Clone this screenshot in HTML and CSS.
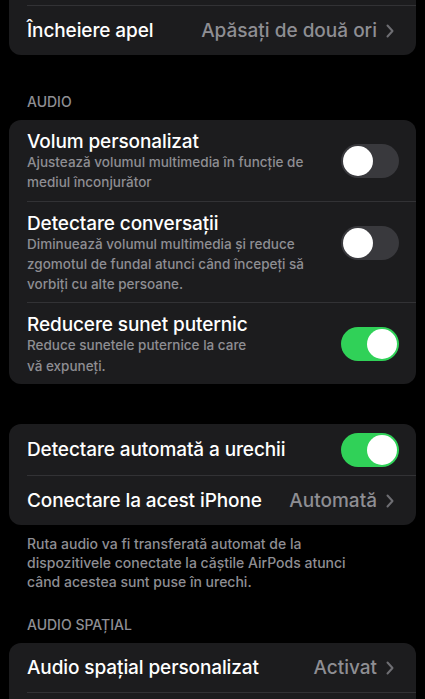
FILE: index.html
```html
<!DOCTYPE html>
<html>
<head>
    <title>AirPods</title>
    <link rel="stylesheet" href="styles.css">
</head>
<body>
    <div class="page">
        <div class="card">
            <div class="row simple"><span class="title">&nbsp;</span></div>
            <div class="row simple">
                <span class="title">Încheiere apel</span>
                <span class="value">Apăsați de două ori <svg class="chev" viewBox="0 0 8 14"><path d="M1.5 1.5 L6.5 7 L1.5 12.5" /></svg></span>
            </div>
        </div>

        <div class="header">AUDIO</div>
        <div class="card">
            <div class="row tall">
                <div class="text">
                    <div class="title">Volum personalizat</div>
                    <div class="sub">Ajustează volumul multimedia în funcție de mediul înconjurător</div>
                </div>
                <div class="toggle"><div class="knob"></div></div>
            </div>
            <div class="row tall">
                <div class="text">
                    <div class="title">Detectare conversații</div>
                    <div class="sub">Diminuează volumul multimedia și reduce zgomotul de fundal atunci când începeți să vorbiți cu alte persoane.</div>
                </div>
                <div class="toggle"><div class="knob"></div></div>
            </div>
            <div class="row tall">
                <div class="text">
                    <div class="title">Reducere sunet puternic</div>
                    <div class="sub narrow">Reduce sunetele puternice la care vă expuneți.</div>
                </div>
                <div class="toggle on"><div class="knob"></div></div>
            </div>
        </div>

        <div class="card gap">
            <div class="row simple first">
                <span class="title">Detectare automată a urechii</span>
                <div class="toggle on"><div class="knob"></div></div>
            </div>
            <div class="row simple">
                <span class="title">Conectare la acest iPhone</span>
                <span class="value">Automată <svg class="chev" viewBox="0 0 8 14"><path d="M1.5 1.5 L6.5 7 L1.5 12.5" /></svg></span>
            </div>
        </div>
        <div class="footer">Ruta audio va fi transferată automat de la dispozitivele conectate la căștile AirPods atunci când acestea sunt puse în urechi.</div>

        <div class="header">AUDIO SPAȚIAL</div>
        <div class="card">
            <div class="row simple">
                <span class="title">Audio spațial personalizat</span>
                <span class="value">Activat <svg class="chev" viewBox="0 0 8 14"><path d="M1.5 1.5 L6.5 7 L1.5 12.5" /></svg></span>
            </div>
            <div class="row simple"><span class="title">&nbsp;</span></div>
        </div>
    </div>
</body>
</html>
```

FILE: styles.css
```css
body {
    margin: 0;
    padding: 0;
    background-color: #000;
    color: #fff;
    font-family: Inter, "Noto Sans", sans-serif;
    overflow: hidden;
}

.page {
    margin-top: -44px;
    padding: 0 9px;
}

.card {
    background-color: #1c1c1e;
    border-radius: 12px;
    padding-left: 18px;
}

.card.gap {
    margin-top: 40px;
}

.row {
    display: flex;
    align-items: center;
    justify-content: space-between;
    padding-right: 17px;
    border-top: 1px solid #323235;
}

.row:first-child {
    border-top: none;
}

.row.simple {
    height: 49px;
}

.row.simple.first {
    height: 51px;
}

.row.tall {
    align-items: flex-start;
    padding-top: 11px;
    padding-bottom: 8px;
}

.row.tall .toggle {
    margin-top: 13px;
}

.title {
    font-size: 19px;
    line-height: 21px;
    font-weight: 500;
    letter-spacing: -0.1px;
}

.sub {
    font-size: 13.5px;
    line-height: 20.3px;
    color: #8e8e93;
    font-weight: 500;
    max-width: 300px;
}

.sub.narrow {
    max-width: 232px;
}

.value {
    display: flex;
    align-items: center;
    gap: 9px;
    font-size: 19px;
    font-weight: 500;
    color: #8e8e93;
}

.chev {
    width: 8px;
    height: 14px;
    fill: none;
    stroke: #6e6e73;
    stroke-width: 2;
    stroke-linecap: round;
    stroke-linejoin: round;
    margin-right: 5px;
}

.toggle {
    flex-shrink: 0;
    width: 58px;
    height: 34px;
    border-radius: 17px;
    background-color: #39393d;
    padding: 2px;
    box-sizing: border-box;
    display: flex;
}

.toggle.on {
    background-color: #30d158;
    justify-content: flex-end;
}

.knob {
    width: 30px;
    height: 30px;
    border-radius: 50%;
    background-color: #fff;
}

.header {
    font-size: 14px;
    line-height: 16px;
    color: #8e8e93;
    font-weight: 500;
    padding: 39px 18px 10px;
}

.footer {
    font-size: 14px;
    line-height: 19px;
    color: #8e8e93;
    font-weight: 500;
    padding: 9px 40px 0 18px;
}

.footer + .header {
    padding-top: 26px;
}
```
